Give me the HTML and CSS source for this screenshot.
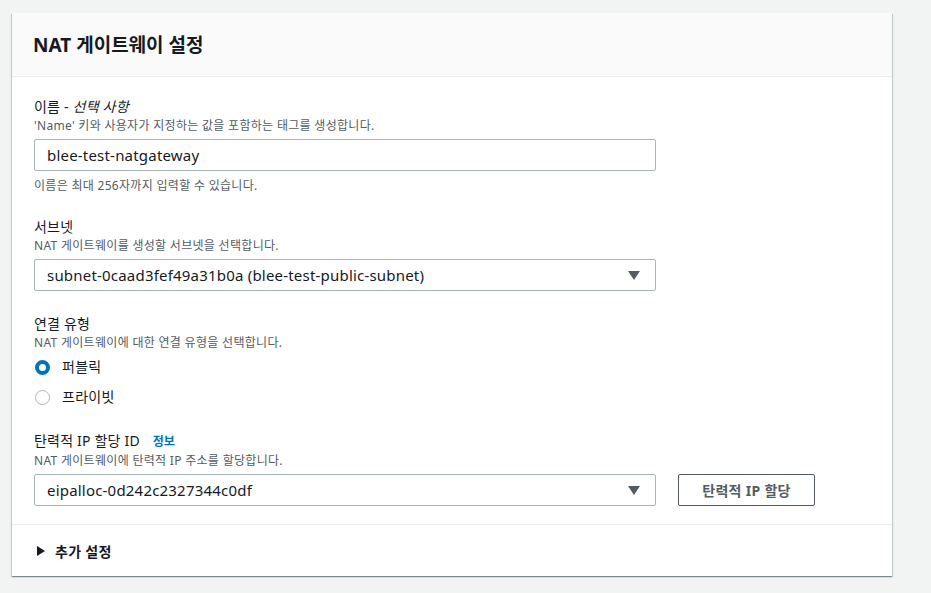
FILE: index.html
```html
<!DOCTYPE html>
<html lang="ko">
<head>
<meta charset="utf-8">
<link rel="stylesheet" href="styles.css">
</head>
<body>
<div class="card">
  <div class="card-header"><h2 class="title">NAT 게이트웨이 설정</h2></div>
  <div class="card-body">
    <div class="field">
      <div class="label">이름 - <i>선택 사항</i></div>
      <div class="desc">'Name' 키와 사용자가 지정하는 값을 포함하는 태그를 생성합니다.</div>
      <div class="control"><div class="input">blee-test-natgateway</div></div>
      <div class="hint">이름은 최대 256자까지 입력할 수 있습니다.</div>
    </div>
    <div class="field">
      <div class="label">서브넷</div>
      <div class="desc">NAT 게이트웨이를 생성할 서브넷을 선택합니다.</div>
      <div class="control"><div class="input select">subnet-0caad3fef49a31b0a (blee-test-public-subnet)<span class="caret"></span></div></div>
    </div>
    <div class="field">
      <div class="label">연결 유형</div>
      <div class="desc">NAT 게이트웨이에 대한 연결 유형을 선택합니다.</div>
      <div class="radios">
        <div class="radio"><span class="dot on"></span>퍼블릭</div>
        <div class="radio"><span class="dot"></span>프라이빗</div>
      </div>
    </div>
    <div class="field">
      <div class="label">탄력적 IP 할당 ID <a class="info">정보</a></div>
      <div class="desc">NAT 게이트웨이에 탄력적 IP 주소를 할당합니다.</div>
      <div class="control row">
        <div class="input select">eipalloc-0d242c2327344c0df<span class="caret"></span></div>
        <button class="btn">탄력적 IP 할당</button>
      </div>
    </div>
  </div>
  <div class="card-footer"><span class="tri"></span>추가 설정</div>
</div>
</body>
</html>
```
FILE: styles.css
```css
* { box-sizing: border-box; }
html, body { margin: 0; }
body {
  background: #f2f3f3;
  padding: 13px 0 16px 12px;
  font-family: "Noto Sans", "Noto Sans CJK KR", sans-serif;
  color: #16191f;
}
.card {
  width: 880px;
  background: #fff;
  box-shadow: 0 1px 1px 0 rgba(0,28,36,.3), 1px 1px 1px 0 rgba(0,28,36,.15), -1px 1px 1px 0 rgba(0,28,36,.15);
}
.card-header {
  height: 64px;
  background: #fafafa;
  border-bottom: 1px solid #eaeded;
  display: flex;
  align-items: center;
  padding: 0 21px;
}
.title {
  margin: 0;
  font-size: 19px;
  font-weight: 700;
  line-height: 22px;
  color: #16191f;
}
.card-body {
  padding: 19px 22px 18px;
  display: flex;
  flex-direction: column;
  gap: 22px;
}
.label {
  font-size: 14px;
  line-height: 22px;
  letter-spacing: 0.2px;
  color: #16191f;
}
.label i { font-style: italic; }
.info {
  color: #0073bb;
  font-weight: 700;
  font-size: 12px;
  margin-left: 9px;
  letter-spacing: 0;
}
.desc, .hint {
  font-size: 12px;
  line-height: 16px;
  letter-spacing: 0.3px;
  color: #545b64;
}
.control { margin-top: 5px; }
.hint { margin-top: 7px; }
.row { display: flex; gap: 22px; }
.input {
  width: 622px;
  height: 32px;
  border: 1px solid #aab7b8;
  border-radius: 2px;
  padding: 0 12px;
  display: flex;
  align-items: center;
  font-size: 15px;
  letter-spacing: 0.2px;
  color: #16191f;
}
.select { justify-content: space-between; }
.caret {
  width: 0; height: 0;
  border-left: 6px solid transparent;
  border-right: 6px solid transparent;
  border-top: 9px solid #545b64;
  margin-right: 3px;
}
.btn {
  width: 137px;
  height: 32px;
  background: #fff;
  border: 1px solid #545b64;
  border-radius: 2px;
  font-family: inherit;
  font-size: 14px;
  font-weight: 700;
  letter-spacing: 0.3px;
  color: #545b64;
  padding: 0;
}
.radios {
  display: flex;
  flex-direction: column;
  margin-top: 5px;
  gap: 8px;
}
.radio {
  display: flex;
  align-items: center;
  gap: 12px;
  font-size: 14px;
  line-height: 22px;
  height: 22px;
  letter-spacing: 0.3px;
  color: #16191f;
}
.dot {
  width: 15px; height: 15px;
  border-radius: 50%;
  border: 1px solid #aab7b8;
  background: #fff;
  margin-left: 1px;
}
.dot.on { border: 4px solid #0073bb; }
.card-footer {
  border-top: 1px solid #eaeded;
  height: 52px;
  display: flex;
  align-items: center;
  padding-left: 25px;
  font-size: 14px;
  font-weight: 700;
  letter-spacing: 0.3px;
  color: #16191f;
}
.tri {
  width: 0; height: 0;
  border-top: 5px solid transparent;
  border-bottom: 5px solid transparent;
  border-left: 8px solid #16191f;
  margin-right: 10px;
}
```
